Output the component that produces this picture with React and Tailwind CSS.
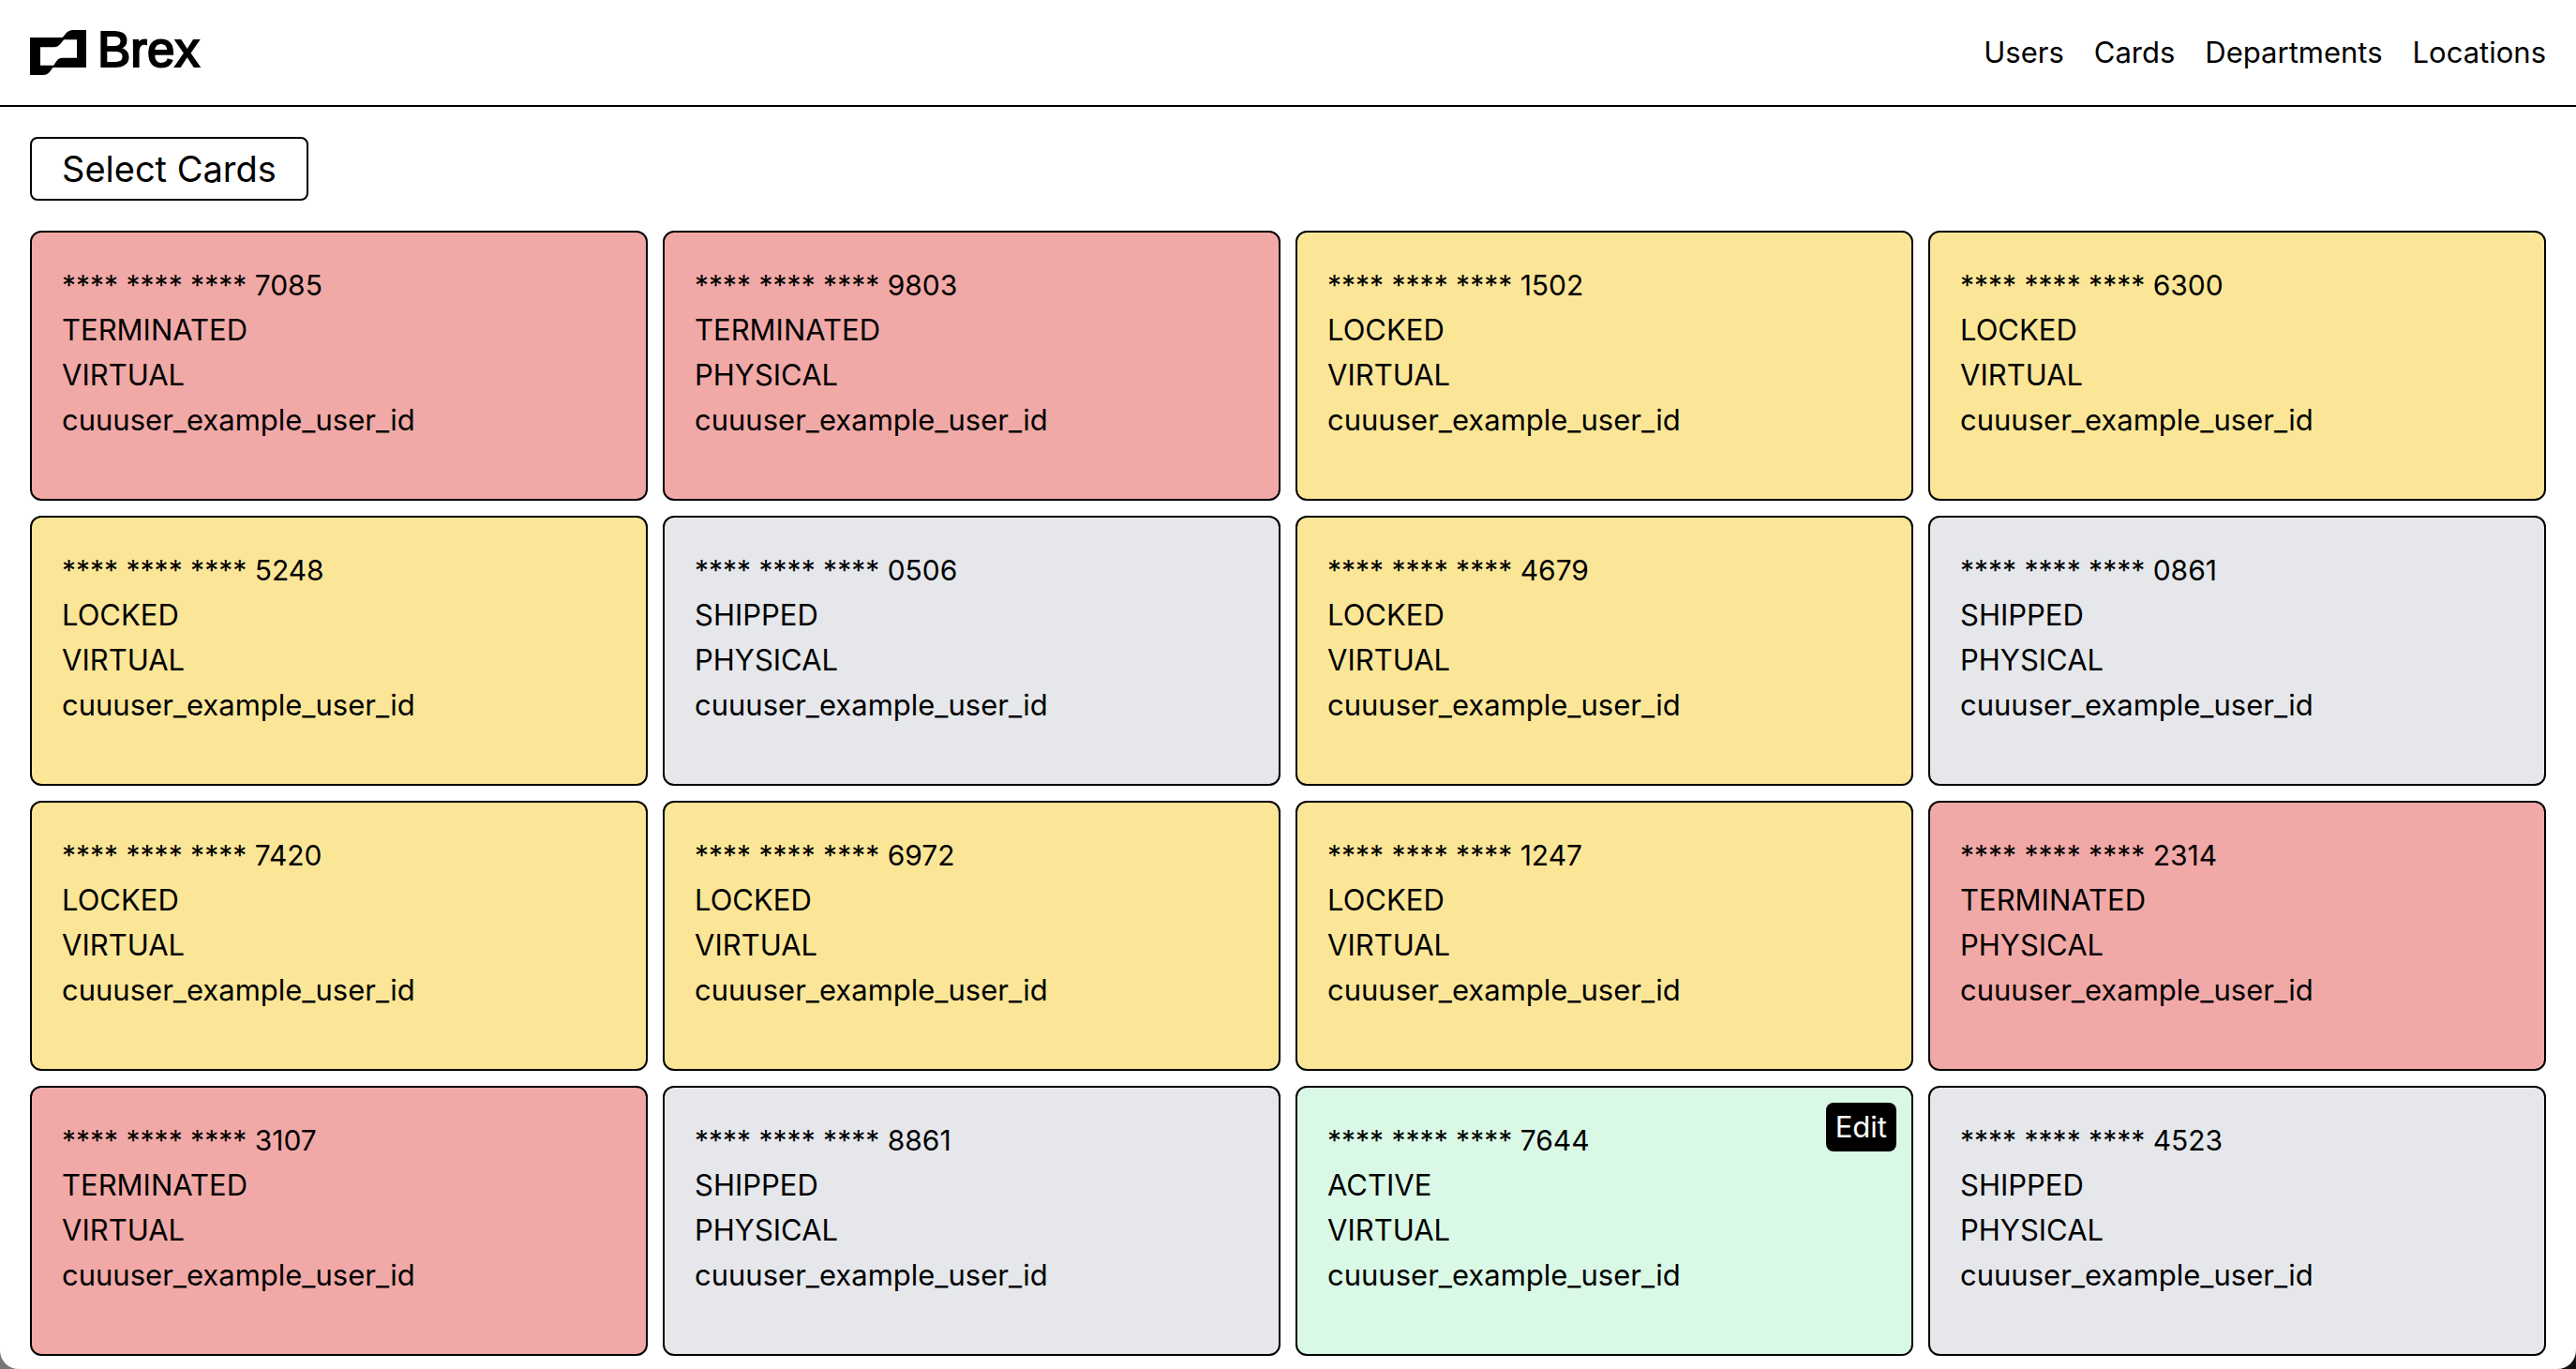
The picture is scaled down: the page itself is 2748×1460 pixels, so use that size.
const NAV_ITEMS = ["Users", "Cards", "Departments", "Locations"];

const STATUS_COLORS = {
  TERMINATED: "bg-[#f1a9a7]",
  LOCKED: "bg-[#fbe697]",
  SHIPPED: "bg-gray-200",
  ACTIVE: "bg-[#daf8e6]",
};

const OWNER = "cuuuser_example_user_id";

const CARDS = [
  { last4: "7085", status: "TERMINATED", type: "VIRTUAL" },
  { last4: "9803", status: "TERMINATED", type: "PHYSICAL" },
  { last4: "1502", status: "LOCKED", type: "VIRTUAL" },
  { last4: "6300", status: "LOCKED", type: "VIRTUAL" },
  { last4: "5248", status: "LOCKED", type: "VIRTUAL" },
  { last4: "0506", status: "SHIPPED", type: "PHYSICAL" },
  { last4: "4679", status: "LOCKED", type: "VIRTUAL" },
  { last4: "0861", status: "SHIPPED", type: "PHYSICAL" },
  { last4: "7420", status: "LOCKED", type: "VIRTUAL" },
  { last4: "6972", status: "LOCKED", type: "VIRTUAL" },
  { last4: "1247", status: "LOCKED", type: "VIRTUAL" },
  { last4: "2314", status: "TERMINATED", type: "PHYSICAL" },
  { last4: "3107", status: "TERMINATED", type: "VIRTUAL" },
  { last4: "8861", status: "SHIPPED", type: "PHYSICAL" },
  { last4: "7644", status: "ACTIVE", type: "VIRTUAL", editable: true },
  { last4: "4523", status: "SHIPPED", type: "PHYSICAL" },
];

function Logo() {
  return (
    <a href="#" className="flex h-12 items-start gap-3">
      <svg viewBox="0 0 60 48" className="h-12 w-[60px]" aria-hidden="true">
        <path
          fillRule="evenodd"
          d="M0 8H34.500C37.500 5.500 39.500 0 46 0H60V40H24.500C22 43 20 48 14 48H0ZM11 18.300V37.700H25C28 35 28.500 29.700 35 29.700H50V10.300H36.300C33 13.500 31.500 18.300 25.500 18.300Z"
        />
      </svg>
      <span className="font-['Liberation_Sans',sans-serif] text-[53px] leading-[42px] [-webkit-text-stroke:2px_black]">
        Brex
      </span>
    </a>
  );
}

function Card({ card }) {
  return (
    <li
      className={`relative min-h-72 rounded-xl border-2 border-black p-8 ${STATUS_COLORS[card.status]}`}
    >
      <p className="text-[30px] leading-12">**** **** **** {card.last4}</p>
      <p>{card.status}</p>
      <p>{card.type}</p>
      <p>{OWNER}</p>
      {card.editable && (
        <button
          type="button"
          className="absolute top-4 right-4 rounded-lg bg-black px-2.5 py-0.5 text-white"
        >
          Edit
        </button>
      )}
    </li>
  );
}

export default function App() {
  return (
    <div className="min-h-screen bg-linear-to-r from-[#777777] to-[#111111]">
      <div className="min-h-screen rounded-b-[20px] bg-white font-[Inter,sans-serif] text-[31px] leading-12 text-black">
        <header className="flex h-[114px] items-start justify-between border-b-2 border-black px-8 pt-8">
          <Logo />
          <nav className="flex gap-8">
            {NAV_ITEMS.map((item) => (
              <a key={item} href="#">
                {item}
              </a>
            ))}
          </nav>
        </header>
        <main className="flex flex-col items-start gap-8 px-8 pt-8 pb-3.5">
          <button
            type="button"
            className="rounded-lg border-2 border-black px-8 py-1 text-[38px] leading-14"
          >
            Select Cards
          </button>
          <ul className="grid w-full grid-cols-4 gap-4">
            {CARDS.map((card) => (
              <Card key={card.last4} card={card} />
            ))}
          </ul>
        </main>
      </div>
    </div>
  );
}
